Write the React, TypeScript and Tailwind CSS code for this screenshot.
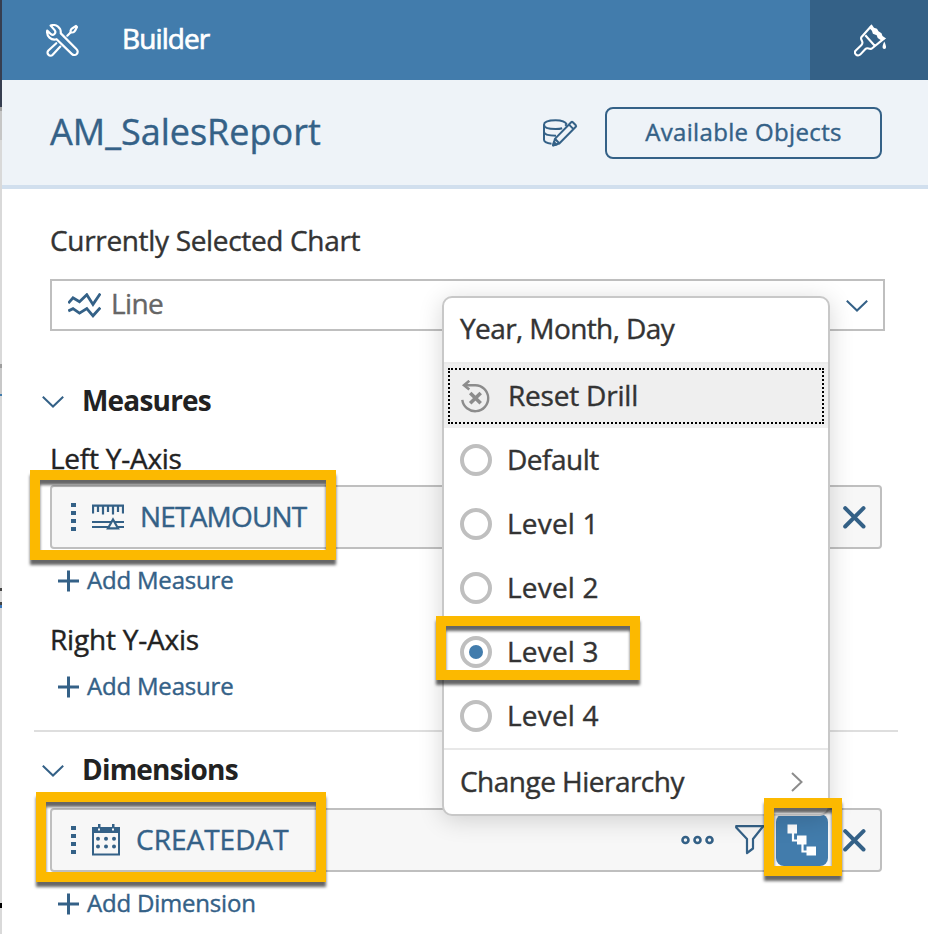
import type { ReactNode } from "react";

const INK = "#346187";

function ToolsIcon() {
  return (
    <svg width="33" height="33" viewBox="0 0 33 33" fill="none" stroke="#fff" strokeWidth="2.200" strokeLinejoin="round" strokeLinecap="round">
      <path d="M4.6 1.500C9.6-.2 15.200 3 14.800 9.400L30.600 25.200a3.200 3.200 0 0 1-4.600 4.900L10.600 15.200C5 16.800.4 12.200 1.200 6.600l3.800 3.600c1.200 1 2.400.8 3.400-.2 1.200-1.200 1.300-2.500.2-3.900Z" />
      <path d="M10.300 19.200 2.400 26.500a2.900 2.900 0 0 0 4.300 4.300l7.600-8.200M21.300 11.700l3-3" />
      <path d="M24.600 8.400c-.6-3 .9-3.900 5.400-6.400l1 1c-2.200 4.700-3 6-6.400 5.400Z" />
    </svg>
  );
}

function BrushIcon() {
  return (
    <svg width="33" height="33" viewBox="0 0 33 33" fill="none" stroke="#fff" strokeWidth="2.100" strokeLinejoin="round">
      <path d="M17.300 2 7.300 13.300c-.8 1.500.3 2.500.9 4.200.5 1.600.3 2.500-.7 3.400L2 26.200a3 3 0 0 0 4.200 4.400l5-5.300c1.200-1.300 2-1.300 3.400-.8 1.400.5 2.600.7 3.600-.2L30.300 14.400M11.300 11.300l9.400 10.400" />
      <path d="M17.600.3 20 3.800l3 1 1.500 2.500 3 2L28.500 12l3.700 2.400-4.500 2.300-4-2.800-1-2.600-3.800-1.500-1-3-3-3Z" fill="#fff" stroke="none" />
      <path d="M30.300 17.500c-2.400 5-2.200 7.300 0 7.500 2.300-.2 2.300-2.500 0-7.500Z" fill="#fff" stroke="none" />
    </svg>
  );
}

function EditDataIcon() {
  return (
    <svg width="35" height="28" viewBox="0 0 35 28" fill="none" stroke={INK} strokeWidth="2" strokeLinejoin="round">
      <path d="M23.700 5.300C22.500 2.600 18.200 1.200 12.600 1.200 5.800 1.200 1 3 1 5.700S5.800 10 12.600 10c3 0 5-.3 6.600-.8M1 5.500v15.300c0 2 2.500 3.400 7.500 4M1 12.800c0 2.600 4.300 3.900 12 3.900M23.700 5.300l-1.500 1.500" />
      <path d="M10.200 26.200l1.700-6.300L28.200 3.300c.6-.6 1-.6 1.600 0l3 3c.5.6.5 1 0 1.500L16.300 24.500ZM26 5.600l4.500 4.500M12.200 20l4 4.300" />
      <path d="M10 26.500l.9-3.600 2.800 2.700Z" fill={INK} />
    </svg>
  );
}

function LineChartIcon() {
  return (
    <svg width="33" height="25" viewBox="0 0 33 25" fill="none" stroke={INK} strokeWidth="2.800">
      <path d="M.3 10.200 5 4.800l6.500 3.900 7.300-7L25 11.400 32.300.6M.3 18l4.700-2.300 6.500 4.400 7.300-4.500 6.200 7.200 7.300-8.200" />
    </svg>
  );
}

function Chevron() {
  return (
    <svg className="shrink-0" width="22" height="12" viewBox="0 0 22 12" fill="none" stroke={INK} strokeWidth="2">
      <path d="M.8.8 11 10.500 21.200.8" />
    </svg>
  );
}

function Grip() {
  return (
    <div className="flex w-[5px] shrink-0 flex-col gap-1">
      <i className="h-1 bg-[#346187]" />
      <i className="h-1 bg-[#346187]" />
      <i className="h-1 bg-[#346187]" />
      <i className="h-1 bg-[#346187]" />
    </div>
  );
}

function MeasureIcon() {
  return (
    <svg className="shrink-0" width="32" height="26" viewBox="0 0 32 26" fill="none" stroke={INK} strokeWidth="2.200">
      <path d="M1 9.500V1.700h30V9.500M6 1v7M11 1v9.500M16 1v7M21 1v9.500M26 1v7M0 18h32M0 23h32" />
      <path d="M16 24.300 21 15.500l5 8.800Z" fill="#f7f7f7" />
    </svg>
  );
}

function CalendarIcon() {
  return (
    <svg className="shrink-0" width="28" height="32" viewBox="0 0 28 32" fill="none">
      <path d="M1 4v26.500h26V4Z" stroke={INK} strokeWidth="2" />
      <path d="M0 3h28v6H0ZM6 0h2.500v5H6ZM20 0h2.500v5H20Z" fill={INK} />
      <path d="M6 4.500h2v2H6ZM20 4.500h2v2h-2Z" fill="#f7f7f7" />
      {[6, 14, 22].map((x) => (
        <g key={x} fill={INK}>
          <circle cx={x} cy="14.700" r="2" />
          <circle cx={x} cy="22.500" r="2" />
        </g>
      ))}
    </svg>
  );
}

function CloseIcon() {
  return (
    <svg className="shrink-0" width="23" height="23" viewBox="0 0 23 23" stroke={INK} strokeWidth="4" strokeLinecap="round">
      <path d="M2.200 2.200l18.300 18.300M20.500 2.200 2.200 20.500" />
    </svg>
  );
}

function PlusIcon() {
  return (
    <svg className="mt-1 shrink-0" width="22" height="22" viewBox="0 0 22 22" stroke={INK} strokeWidth="3">
      <path d="M0 11h21M10.500.5v21" />
    </svg>
  );
}

function ResetIcon() {
  return (
    <svg className="shrink-0" width="29" height="33" viewBox="0 0 29 33" fill="none" stroke="#8c8c8c" strokeWidth="2.400">
      <path d="M1.300 19.800A13 13 0 1 0 14.300 5.200H3.500" />
      <path d="M8.300.8 3 5.200l5.300 4.300" strokeWidth="2.600" />
      <path d="M9.200 13l10.500 10.300M19.700 13 9.200 23.300" strokeWidth="3.600" />
    </svg>
  );
}

function SectionHeader({ children }: { children: ReactNode }) {
  return (
    <div className="flex h-10 items-center pl-10">
      <div className="flex pt-1.5">
        <Chevron />
      </div>
      <h2 className="ml-[18px] pt-px text-[28px] leading-10 font-bold tracking-[-0.8px] text-[#222] [-webkit-text-stroke:0]">{children}</h2>
    </div>
  );
}

function AddRow({ children }: { children: ReactNode }) {
  return (
    <div className="flex h-10 items-center pl-14 text-[24px] leading-10 tracking-[-0.2px] text-[#346187]">
      <PlusIcon />
      <span className="ml-[7px] pt-px">{children}</span>
    </div>
  );
}

function Option({ children, checked }: { children: ReactNode; checked?: boolean }) {
  return (
    <div className="flex h-16 items-center pl-4">
      <span className="flex size-8 shrink-0 items-center justify-center rounded-full border-4 border-[#bfbfbf]">
        {checked && <i className="size-3.5 rounded-full bg-[#427cac]" />}
      </span>
      <span className="ml-[15px] pb-[3px]">{children}</span>
    </div>
  );
}

function PageEdge() {
  return (
    <div className="flex w-0.5 shrink-0 flex-col bg-[#d9d9d9]">
      <i className="h-[107px] bg-[#363e50]" />
      <i className="h-1 bg-[#a3a3a3]" />
      <i className="h-[29px] bg-[#c6c6c6]" />
      <i className="mt-[224px] h-1 bg-[#9d9d9d]" />
      <i className="h-[26px] bg-[#c8c8c8]" />
      <i className="h-0.5 bg-[#427cac]" />
      <i className="mt-[192px] h-[3px] bg-[#444]" />
      <i className="mt-[11px] h-[3px] bg-[#444]" />
      <i className="h-[3px] bg-[#3a78bd]" />
      <i className="mt-[295px] h-[5px] bg-black" />
    </div>
  );
}

export default function App() {
  return (
    <div className="relative flex h-[934px] w-[928px] overflow-hidden bg-white font-['Open_Sans',sans-serif] text-[28px] leading-10 [-webkit-text-stroke:0.4px]">
      <PageEdge />
      <main className="flex min-w-0 flex-1 flex-col">
        <header className="flex h-20 shrink-0 bg-[#427cac] text-white">
          <div className="flex flex-1 items-center pl-11">
            <ToolsIcon />
            <h1 className="ml-[43px] pb-1 tracking-[-0.9px] [-webkit-text-stroke:0.7px]">Builder</h1>
          </div>
          <div className="flex w-[118px] items-center justify-center bg-[#346187] pl-0.5">
            <BrushIcon />
          </div>
        </header>

        <div className="flex h-[109px] shrink-0 items-center border-b-4 border-[#d1dfee] bg-[#eef3f8] pr-[46px] pl-12 text-[#346187]">
          <h2 className="pb-px text-[36px]">AM_SalesReport</h2>
          <div className="mr-[27px] ml-auto">
            <EditDataIcon />
          </div>
          <button className="h-[52px] w-[277px] rounded-lg border-2 border-[#346187] pb-px text-[24px] leading-10 tracking-[0.35px]">
            Available Objects
          </button>
        </div>

        <div className="mt-[31px] h-10 pl-12 tracking-[-0.33px] text-[#333]">Currently Selected Chart</div>
        <div className="mt-[19px] ml-12 flex h-[52px] w-[835px] shrink-0 items-center border-2 border-[#bfbfbf] pr-[15px] pl-4">
          <LineChartIcon />
          <span className="ml-2.5 pb-1 tracking-[-0.6px] text-[#666]">Line</span>
          <div className="ml-auto pt-0.5">
            <Chevron />
          </div>
        </div>

        <div className="mt-12">
          <SectionHeader>Measures</SectionHeader>
        </div>
        <div className="mt-[19px] h-10 pl-12 tracking-[-0.25px] text-[#222]">Left Y-Axis</div>
        <div className="mt-[7px] ml-12 flex h-16 w-[832px] shrink-0 items-center rounded border-2 border-[#bfbfbf] bg-[#f7f7f7] pr-3.5 pl-[19px] text-[#346187]">
          <Grip />
          <div className="ml-4">
            <MeasureIcon />
          </div>
          <span className="ml-4 pb-[3px] tracking-[-0.8px]">NETAMOUNT</span>
          <div className="ml-auto">
            <CloseIcon />
          </div>
        </div>
        <div className="mt-2.5">
          <AddRow>Add Measure</AddRow>
        </div>
        <div className="mt-5 h-10 pl-12 tracking-[-0.2px] text-[#222]">Right Y-Axis</div>
        <div className="mt-1.5">
          <AddRow>Add Measure</AddRow>
        </div>
        <div className="mt-[25px] ml-8 h-0.5 w-[864px] shrink-0 bg-[#dedede]" />
        <div className="mt-4">
          <SectionHeader>Dimensions</SectionHeader>
        </div>
        <div className="mt-5 ml-12 flex h-16 w-[832px] shrink-0 items-center rounded border-2 border-[#bfbfbf] bg-[#f7f7f7] pr-3.5 pl-[19px] text-[#346187]">
          <Grip />
          <div className="ml-4">
            <CalendarIcon />
          </div>
          <span className="ml-4 pb-[3px]">CREATEDAT</span>
          <div className="ml-auto flex items-center">
            <svg width="34" height="10" viewBox="0 0 34 10" fill="none" stroke={INK} strokeWidth="2.600">
              <circle cx="4.500" cy="5" r="3" />
              <circle cx="16.500" cy="5" r="3" />
              <circle cx="28.500" cy="5" r="3" />
            </svg>
            <svg className="ml-5" width="30" height="30" viewBox="0 0 30 30" fill="none" stroke={INK} strokeWidth="2.200" strokeLinejoin="round">
              <path d="M1.200 1.200h27L18 14v9.500L12 28V14L1.200 2.500Z" />
            </svg>
            <div className="ml-[11px] flex size-[52px] items-center justify-center rounded-lg bg-[#427cac]">
              <svg width="30" height="32" viewBox="0 0 30 32" fill="none" stroke="#fff" strokeWidth="2.200">
                <path d="M6 9v7.500h6M15.500 20v7.500h6" />
                <path d="M.5.500H10v9H.500ZM10 11.500h9.500v9H10ZM19.500 22.500H29v9h-9.500Z" fill="#fff" stroke="none" />
              </svg>
            </div>
            <div className="ml-[15px]">
              <CloseIcon />
            </div>
          </div>
        </div>
        <div className="mt-2.5">
          <AddRow>Add Dimension</AddRow>
        </div>
      </main>

      <div className="absolute top-[296px] left-[442px] h-[520px] w-[388px] rounded-[10px] border-2 border-[#c8c8c8] bg-white text-[#333] shadow-[0_4px_24px_rgba(0,0,0,0.16)]">
        <div className="h-16 pt-2.5 pl-4 tracking-[-0.6px]">Year, Month, Day</div>
        <div className="h-[66px] border-t-2 border-[#ebebeb] bg-[#efefef] px-1 pt-1">
          <div className="flex h-14 items-center border-2 border-dotted border-black pl-[11px]">
            <ResetIcon />
            <span className="ml-[18px] pb-[3px] tracking-[-0.2px]">Reset Drill</span>
          </div>
        </div>
        <Option>
          <span className="tracking-[-0.5px]">Default</span>
        </Option>
        <Option>
          <span className="tracking-[0.2px]">Level 1</span>
        </Option>
        <Option>
          <span className="tracking-[0.2px]">Level 2</span>
        </Option>
        <Option checked>
          <span className="tracking-[0.2px]">Level 3</span>
        </Option>
        <Option>
          <span className="tracking-[0.2px]">Level 4</span>
        </Option>
        <div className="flex h-[66px] items-center border-t-2 border-[#e8e8e8] pr-[25px] pl-4">
          <span className="pb-[3px] tracking-[-0.52px]">Change Hierarchy</span>
          <svg className="ml-auto" width="12" height="20" viewBox="0 0 12 20" fill="none" stroke="#8c8c8c" strokeWidth="2">
            <path d="M1 1l9.500 9L1 19" />
          </svg>
        </div>
      </div>

      <div className="absolute top-[470px] left-[30px] h-[90px] w-[306px] border-10 border-[#fcb900] drop-shadow-[0_5px_1.5px_rgba(0,0,0,0.6)]" />
      <div className="absolute top-[792px] left-[36px] h-[90px] w-[290px] border-10 border-[#fcb900] drop-shadow-[0_5px_1.5px_rgba(0,0,0,0.6)]" />
      <div className="absolute top-[616px] left-[436px] h-[64px] w-[204px] border-10 border-[#fcb900] drop-shadow-[0_5px_1.5px_rgba(0,0,0,0.6)]" />
      <div className="absolute top-[798px] left-[764px] h-[78px] w-[78px] border-10 border-[#fcb900] drop-shadow-[0_5px_1.5px_rgba(0,0,0,0.6)]" />
    </div>
  );
}
